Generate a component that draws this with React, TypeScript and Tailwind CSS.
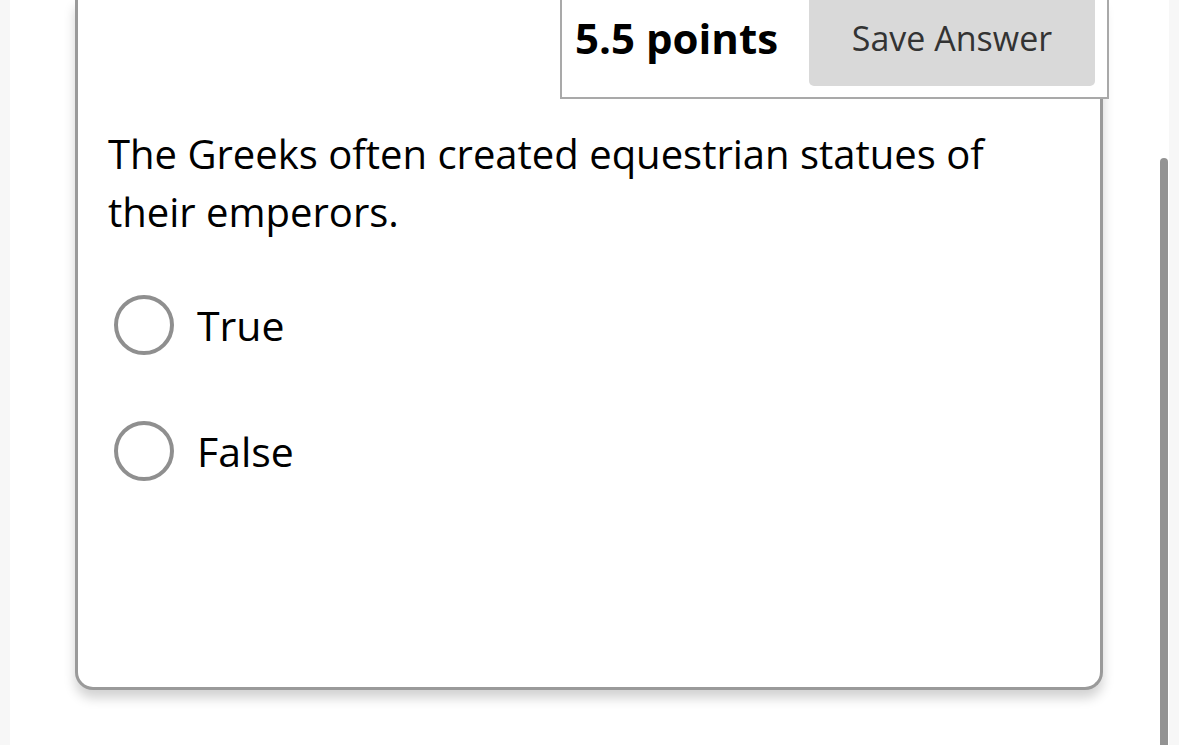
const options = ["True", "False"];

const Radio = ({label}: {label: string}) => (
  <label className="flex items-center gap-[23px]">
    <span className="h-[60px] w-[60px] shrink-0 rounded-full border-[4px] border-[#8f8f8f] bg-white" />
    <span className="text-[41px] leading-none text-black">{label}</span>
  </label>
);

export default function App() {
  return (
    <div
      className="flex h-[745px] w-[1179px] overflow-hidden bg-white"
      style={{fontFamily: '"Open Sans", "Noto Sans", sans-serif'}}>
      {/* left gutter */}
      <div className="w-[10px] shrink-0 bg-[#f7f7f7]" />

      <div className="relative flex-1 pl-[65px] pr-[57px]">
        {/* question card */}
        <div className="flex h-[690px] flex-col rounded-b-[18px] border-x-[3px] border-b-[3px] border-[#9a9a9a] bg-white shadow-[0_8px_12px_rgba(0,0,0,0.18)]">
          {/* header */}
          <div className="-mr-[9px] flex justify-end">
            <div className="flex h-[99px] w-[549px] items-start border-x-2 border-b-2 border-[#a9a9a9] bg-white pl-[13px] pr-[12px]">
              <div className="flex h-[86px] flex-1 items-center pb-[10px]">
                <span className="text-[42px] font-bold leading-none text-black">5.5 points</span>
              </div>
              <button className="flex h-[86px] w-[286px] items-center justify-center rounded-b-[5px] bg-[#d9d9d9] pb-[10px] text-[34px] text-[#333]">
                Save Answer
              </button>
            </div>
          </div>

          <p className="mt-[26px] pl-[30px] pr-[60px] text-[40px] leading-[58px] text-black">
            The Greeks often created equestrian statues of their emperors.
          </p>

          <div className="mt-[54px] flex flex-col gap-[66px] pl-[36px]">
            {options.map((o) => (
              <Radio key={o} label={o} />
            ))}
          </div>
        </div>
      </div>

      {/* scrollbar */}
      <div className="flex w-[19px] shrink-0">
        <div className="w-[9px] bg-white pt-[158px]">
          <div className="h-full w-[8px] rounded-t-[4px] bg-[#939393]" />
        </div>
        <div className="flex-1 bg-[#f7f7f7]" />
      </div>
    </div>
  );
}
